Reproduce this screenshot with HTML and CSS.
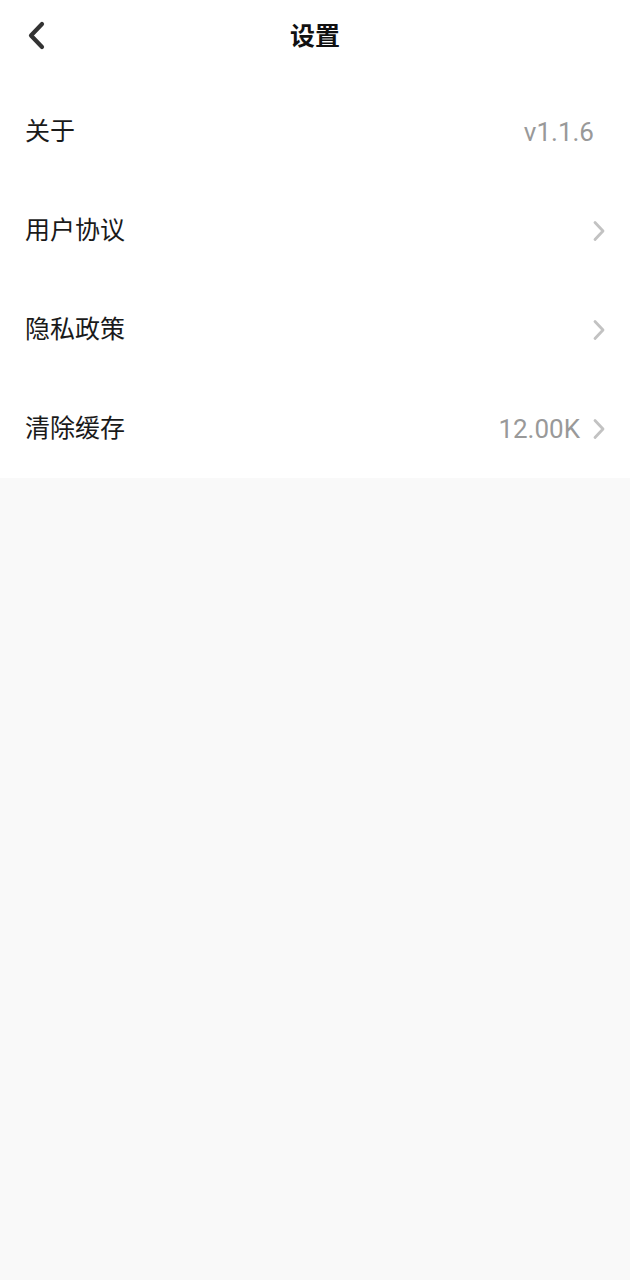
FILE: index.html
```html
<!DOCTYPE html>
<html lang="zh">
<head>
<meta charset="utf-8">
<title>设置</title>
<link rel="stylesheet" href="styles.css">
</head>
<body>
<div class="page">
  <header class="topbar">
    <span class="back">
      <svg width="20" height="30" viewBox="0 0 20 30"><path d="M16 3 L5 14.5 L16 26" fill="none" stroke="#333" stroke-width="4.2" stroke-linecap="round" stroke-linejoin="round"/></svg>
    </span>
    <h1 class="title">设置</h1>
  </header>
  <ul class="list">
    <li class="row">
      <span class="label">关于</span>
      <span class="value value-plain">v1.1.6</span>
    </li>
    <li class="row">
      <span class="label">用户协议</span>
      <span class="chev"><svg width="14" height="22" viewBox="0 0 14 22"><path d="M3 2.5 L11 11 L3 19.5" fill="none" stroke="#c2c2c2" stroke-width="2.8" stroke-linecap="round" stroke-linejoin="round"/></svg></span>
    </li>
    <li class="row">
      <span class="label">隐私政策</span>
      <span class="chev"><svg width="14" height="22" viewBox="0 0 14 22"><path d="M3 2.5 L11 11 L3 19.5" fill="none" stroke="#c2c2c2" stroke-width="2.8" stroke-linecap="round" stroke-linejoin="round"/></svg></span>
    </li>
    <li class="row">
      <span class="label">清除缓存</span>
      <span class="value">12.00K</span>
      <span class="chev"><svg width="14" height="22" viewBox="0 0 14 22"><path d="M3 2.5 L11 11 L3 19.5" fill="none" stroke="#c2c2c2" stroke-width="2.8" stroke-linecap="round" stroke-linejoin="round"/></svg></span>
    </li>
  </ul>
</div>
</body>
</html>
```

FILE: styles.css
```css
html, body {
  margin: 0;
  padding: 0;
  background: #f9f9f9;
}
body {
  font-family: Roboto, "Noto Sans CJK SC", sans-serif;
  color: #1a1a1a;
}
.page {
  width: 630px;
  min-height: 1280px;
  background: #f9f9f9;
}
.topbar {
  position: relative;
  height: 72px;
  display: flex;
  align-items: center;
  justify-content: center;
  background: #fff;
}
.back {
  position: absolute;
  left: 26px;
  top: 21px;
  width: 20px;
  height: 30px;
  display: flex;
}
.title {
  margin: 0;
  font-size: 25px;
  font-weight: 700;
  color: #111;
  line-height: 1;
}
.list {
  list-style: none;
  margin: 0;
  padding: 10px 0 0;
  background: #fff;
}
.row {
  height: 99px;
  display: flex;
  align-items: center;
  padding: 0 24px 0 25px;
}
.label {
  flex: 1;
  font-size: 25px;
  color: #1a1a1a;
  line-height: 1;
}
.value {
  font-size: 26px;
  color: #999;
  line-height: 1;
}
.value-plain {
  margin-right: 12px;
}
.chev {
  display: flex;
  margin-left: 12px;
}
```
